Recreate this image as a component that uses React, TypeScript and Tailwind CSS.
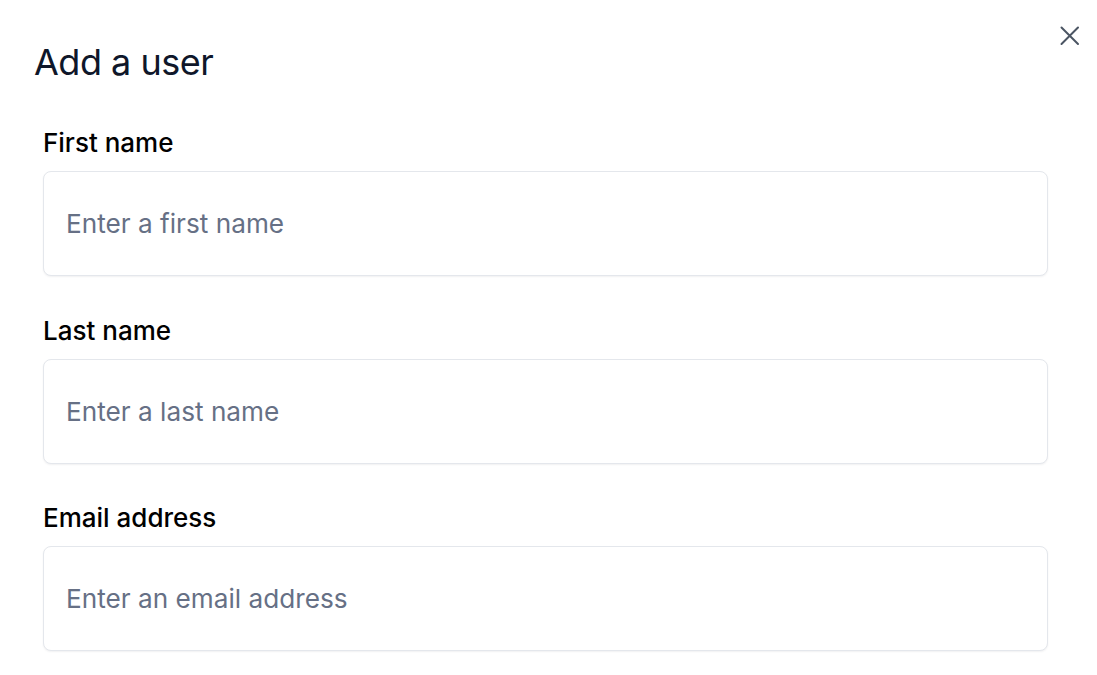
const fields = [
  { id: "first", label: "First name", placeholder: "Enter a first name" },
  { id: "last", label: "Last name", placeholder: "Enter a last name" },
  { id: "email", label: "Email address", placeholder: "Enter an email address" },
];

export default function App() {
  return (
    <div className="relative h-[675px] w-[1097px] overflow-hidden bg-white font-['Inter',sans-serif]">
      <button
        type="button"
        aria-label="Close"
        className="absolute left-[1056px] top-[22px] flex h-[28px] w-[28px] items-center justify-center text-[#4b5563]"
      >
        <svg width="28" height="28" viewBox="0 0 28 28" fill="none" stroke="currentColor" strokeWidth="2" strokeLinecap="round">
          <path d="M5.5 5.5L22 22M22 5.5L5.5 22" />
        </svg>
      </button>

      <h2 className="pl-[34px] pt-[35px] text-[36px] leading-[54px] font-normal tracking-[-0.5px] text-[#0f172a]">
        Add a user
      </h2>

      <form className="flex flex-col gap-[36.5px] pl-[43px] pr-[50px] pt-[36px]">
        {fields.map((f) => (
          <div key={f.id} className="flex flex-col gap-[10px]">
            <label htmlFor={f.id} className="text-[26px] leading-[36px] font-medium text-black">
              {f.label}
            </label>
            <input
              id={f.id}
              placeholder={f.placeholder}
              className="h-[105px] w-[1005px] rounded-[8px] border border-[#e4e7ec] bg-white px-[22px] text-[26.2px] text-[#0f172a] shadow-[0_1px_2px_rgba(16,24,40,0.06)] outline-none placeholder:text-[#667085]"
            />
          </div>
        ))}
      </form>
    </div>
  );
}
